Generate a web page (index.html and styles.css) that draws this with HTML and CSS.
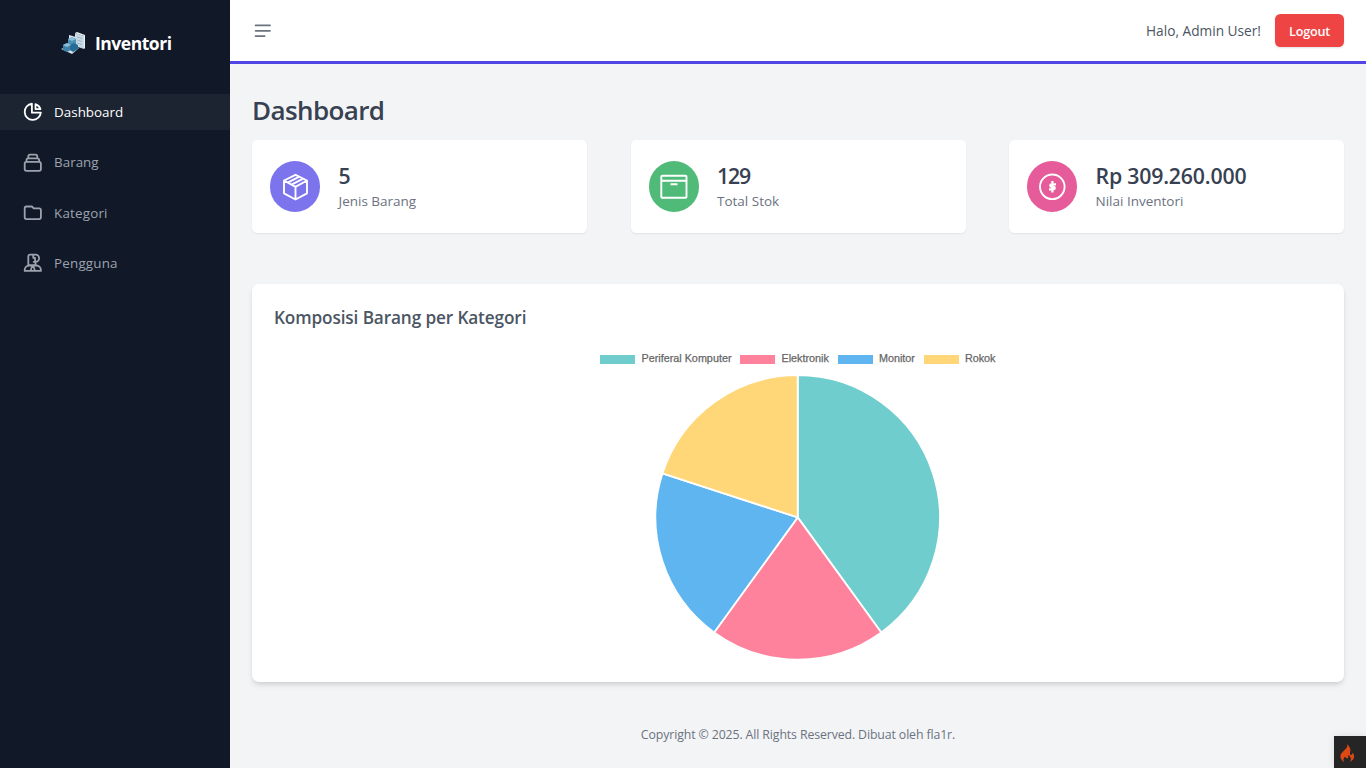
FILE: index.html
```html
<!DOCTYPE html>
<html lang="id">
<head>
<meta charset="utf-8">
<title>Inventori - Dashboard</title>
<link rel="stylesheet" href="styles.css">
</head>
<body>
<div class="app">
  <aside class="sidebar">
    <div class="brand">
      <svg class="brand-logo" viewBox="0 0 26 24">
        <path d="M9 4l7 2v9l-7-2z" fill="#dfe8ee"/>
        <path d="M15 2l9 3v13l-9-3z" fill="#c9d9e3"/>
        <path d="M15 2l2-1 8 3v13l-1 1V5z" fill="#eef3f6"/>
        <path d="M17 6l5 1.500M17 9l5 1.500M17 12l5 1.500" stroke="#8fa9ba" stroke-width=".8"/>
        <path d="M1 18l10-4 8 3-7 6z" fill="#d5e2ea"/>
        <path d="M3 14l4-2 4 2v5l-4 2-4-2z" fill="#3d83ab"/>
        <path d="M8 8l4-2 4 2v6l-4 2-4-2z" fill="#4d8fb5"/>
        <path d="M10 14l4-2 4 2v4l-5 3-3-2z" fill="#286b96"/>
        <path d="M3 14l4-2 4 2-4 2zM8 8l4-2 4 2-4 2z" fill="#8dbdd8"/>
      </svg>
      <span class="brand-name">Inventori</span>
    </div>
    <nav class="nav">
      <a class="nav-item active"><svg class="icon" viewBox="0 0 24 24"><path d="M11 3.055A9.001 9.001 0 1020.945 13H11V3.055z"/><path d="M20.488 9H15V3.512A9.025 9.025 0 0120.488 9z"/></svg><span>Dashboard</span></a>
      <a class="nav-item"><svg class="icon" viewBox="0 0 24 24"><path d="M19 11H5m14 0a2 2 0 012 2v6a2 2 0 01-2 2H5a2 2 0 01-2-2v-6a2 2 0 012-2m14 0V9a2 2 0 00-2-2M5 11V9a2 2 0 012-2m0 0V5a2 2 0 012-2h6a2 2 0 012 2v2M7 7h10"/></svg><span>Barang</span></a>
      <a class="nav-item"><svg class="icon" viewBox="0 0 24 24"><path d="M3 7v10a2 2 0 002 2h14a2 2 0 002-2V9a2 2 0 00-2-2h-6l-2-2H5a2 2 0 00-2 2z"/></svg><span class="wide">Kategori</span></a>
      <a class="nav-item"><svg class="icon people" viewBox="0 0 24 24"><path d="M7 14.500V5a2 2 0 012-2h6a3.800 3.800 0 010 8h-2M12.500 4v2.500h2V11M15 11v4M7 14.500h9M3 21v-1a5 5 0 015-5h1a5 5 0 015 5v1zM10 21v-1a5 5 0 015-5h1a5 5 0 015 5v1z"/></svg><span class="wide">Pengguna</span></a>
    </nav>
  </aside>
  <div class="content">
    <header class="topbar">
      <svg class="icon menu" viewBox="0 0 24 24"><path d="M4 6h16M4 12h16M4 18h10"/></svg>
      <div class="account"><span class="hello">Halo, Admin User!</span><button class="logout">Logout</button></div>
    </header>
    <main class="main">
      <h1 class="title">Dashboard</h1>
      <section class="stats">
        <div class="stat">
          <div class="disc violet"><svg viewBox="0 0 28 28"><path d="M14.500 1.800L26 7.500v12.800L14.500 26.500 3 20.300V7.500zM3 7.500l11.500 6.300L26 7.500M14.500 13.800v12.700M6.800 9.600L18.300 3.700M10.600 11.700L22.200 5.600"/></svg></div>
          <div class="figures"><div class="value">5</div><div class="label">Jenis Barang</div></div>
        </div>
        <div class="stat">
          <div class="disc green"><svg viewBox="0 0 28 28"><rect x="1.300" y="2.800" width="25.200" height="22" rx="1"/><path d="M1.300 7.800h25.200M10.500 11.300h7"/></svg></div>
          <div class="figures"><div class="value count">129</div><div class="label">Total Stok</div></div>
        </div>
        <div class="stat">
          <div class="disc pink"><svg viewBox="0 0 28 28"><circle cx="14.300" cy="13.800" r="12.300"/><path class="dollar" d="M18 11.300h-4.500a1.250 1.250 0 000 2.500h2a1.250 1.250 0 010 2.500H11M14.400 8v11.600"/></svg></div>
          <div class="figures"><div class="value amount">Rp 309.260.000</div><div class="label">Nilai Inventori</div></div>
        </div>
      </section>
      <section class="panel">
        <h2 class="panel-title">Komposisi Barang per Kategori</h2>
        <div class="legend">
          <div class="key"><i class="swatch teal"></i>Periferal Komputer</div>
          <div class="key"><i class="swatch rose"></i>Elektronik</div>
          <div class="key"><i class="swatch blue"></i>Monitor</div>
          <div class="key"><i class="swatch yellow"></i>Rokok</div>
        </div>
        <svg class="pie" viewBox="-142.700 -143.400 286 286">
          <path fill="#70cdcd" d="M0 0V-142.200A142.200 142.200 0 0 1 83.580 115.040z"/>
          <path fill="#ff829d" d="M0 0L83.580 115.040A142.200 142.200 0 0 1 -83.580 115.040z"/>
          <path fill="#5eb5ef" d="M0 0L-83.580 115.040A142.200 142.200 0 0 1 -135.240 -43.940z"/>
          <path fill="#ffd778" d="M0 0L-135.240 -43.940A142.200 142.200 0 0 1 0 -142.200z"/>
        </svg>
      </section>
      <footer class="footer"><span>Copyright © 2025. All Rights Reserved. Dibuat oleh fla1r.</span></footer>
    </main>
  </div>
  <div class="debug"><svg viewBox="0 0 16 20"><path fill="#dd4814" d="M7.500 0c1 3-1 4.500-3 6.500C2 9 0 11 .5 14c.4 2.500 2 4 4 5-1.600-2.300-.8-4.200 1-5.700C6 15 7 15.300 8 15c1.500-.6 1-2.300.3-3.500 3 1 4.500 4.500 2.200 7.500 3-1.200 5-3.500 4.500-6.500-.2-1.500-1-2.500-1.800-3.500.2 1.500-.5 2.500-1.500 2.500C9.500 11.300 11.500 8 11 5.500 10.500 3 9 1 7.500 0z"/></svg></div>
</div>
</body>
</html>
```
FILE: styles.css
```css
* { box-sizing: border-box; }
body { margin: 0; font-family: "Open Sans", "Noto Sans", sans-serif; color: #374151; background: #f3f4f6; }
.app { display: flex; height: 768px; overflow: hidden; }
.sidebar { width: 230px; flex: none; background: #111827; }
.brand { height: 94px; padding: 0 0 8px 60px; display: flex; align-items: center; }
.brand-logo { width: 26px; height: 24px; margin-right: 9px; }
.brand-name { font-size: 17.500px; line-height: 24px; font-weight: 700; color: #fff; letter-spacing: -.47px; }
.nav { display: flex; flex-direction: column; gap: 14.400px; }
.nav-item { height: 36px; display: flex; align-items: center; padding-left: 22px; gap: 10.500px; color: #9ca3af; font-size: 13.400px; }
.wide { letter-spacing: .18px; }
.nav-item.active { background: #1c2331; color: #fff; }
.icon { width: 21.600px; height: 21.600px; fill: none; stroke: currentColor; stroke-width: 2; stroke-linecap: round; stroke-linejoin: round; }
.content { flex: 1; min-width: 0; }
.topbar { height: 64px; background: #fff; border-bottom: 3px solid #4f46e5; display: flex; align-items: center; justify-content: space-between; padding: 0 22px; }
.menu { color: #6b7280; }
.account { display: flex; align-items: center; gap: 14px; }
.hello { font-size: 13.700px; color: #4b5563; }
.logout { width: 69px; height: 33px; border: 0; border-radius: 5.400px; padding: 2px 0 0; background: #ef4444; color: #fff; font: 600 12.600px "Open Sans", sans-serif; letter-spacing: -.2px; box-shadow: 0 1px 2px rgba(0,0,0,.12); }
.main { padding: 28px 22px 0; }
.title { margin: 0; height: 48px; line-height: 36px; font-size: 26px; font-weight: 600; letter-spacing: -.6px; }
.stats { display: grid; grid-template-columns: repeat(3, 335px); justify-content: space-between; }
.stat { height: 93px; background: #fff; border-radius: 5.400px; box-shadow: 0 1px 2px rgba(0,0,0,.07); display: flex; align-items: center; gap: 18.500px; padding: 0 18px; }
.disc { width: 50px; height: 50.500px; border-radius: 50%; display: grid; place-items: center; }
.disc svg { width: 28px; height: 28px; fill: none; stroke: #fff; stroke-width: 1.900; stroke-linejoin: round; }
.disc .dollar { stroke-width: 2.200; }
.violet { background: #7c74ed; }
.green { background: #50bb78; }
.pink { background: #e65c9a; }
.figures { padding-top: 3px; }
.value { font-size: 21.300px; line-height: 26px; font-weight: 600; white-space: nowrap; }
.count { letter-spacing: -1.200px; }
.amount { letter-spacing: -.2px; }
.label { font-size: 13.500px; line-height: 24px; color: #6b7280; }
.panel { margin-top: 51px; height: 398px; background: #fff; border-radius: 7.200px; box-shadow: 0 4px 6px -1px rgba(0,0,0,.1), 0 2px 4px -1px rgba(0,0,0,.08); padding: 20px 22px; display: flex; flex-direction: column; align-items: center; }
.panel-title { align-self: flex-start; margin: 0; height: 47px; line-height: 27px; font-size: 17.200px; font-weight: 600; letter-spacing: -.12px; color: #4b5563; }
.legend { display: flex; gap: 9px; height: 14px; align-items: center; font: 10.800px/14px "Liberation Sans", sans-serif; color: #666; -webkit-text-stroke: .25px #666; }
.key { display: flex; align-items: center; }
.swatch { width: 35px; height: 9px; margin: 3px 6px 0 0; }
.teal { background: #70cdcd; }
.rose { background: #ff829d; }
.blue { background: #5eb5ef; }
.yellow { background: #ffd778; }
.pie { width: 286px; height: 286px; margin-top: 9px; margin-left: -1px; stroke: #fff; stroke-width: 1.800; flex: none; }
.footer { margin-top: 43px; text-align: center; line-height: 20px; font-size: 12.300px; letter-spacing: -.11px; color: #6b7280; }
.debug { position: fixed; right: 0; bottom: 0; width: 32px; height: 32px; background: #252525; display: grid; place-items: center; box-shadow: 0 0 8px rgba(0,0,0,.1); }
.debug svg { width: 15px; height: 19px; margin-right: 5px; margin-top: 2px; }
```
